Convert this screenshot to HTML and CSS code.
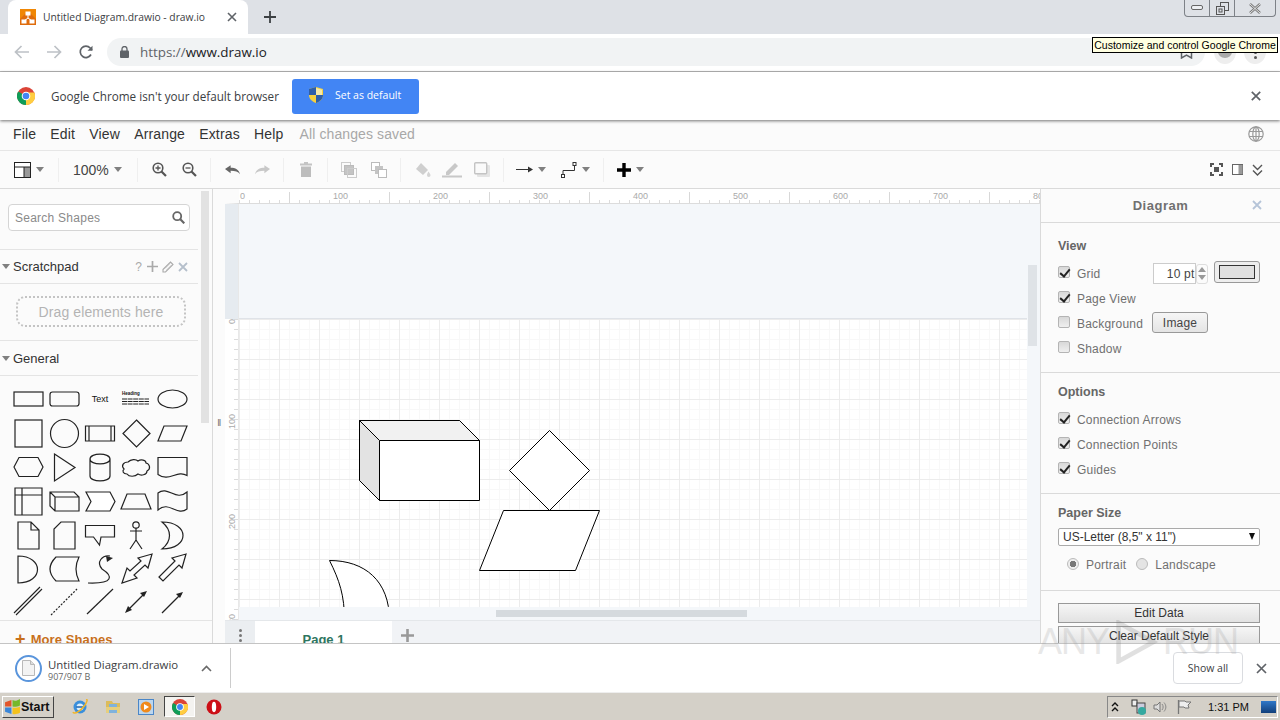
FILE: index.html
```html
<!DOCTYPE html>
<html lang="en">
<head>
    <meta charset="UTF-8">
    <title>Untitled Diagram.drawio - draw.io</title>
    <link rel="stylesheet" href="styles.css">
</head>
<body>
<div class="screen">

    <!-- Chrome tab strip -->
    <div class="tabstrip">
        <div class="tab">
            <svg class="favicon" width="16" height="16" viewBox="0 0 16 16"><rect width="16" height="16" fill="#f08705"/><path d="M0 16V10L5 5h6l5 5v6z" fill="#df6c0c"/><path d="M8 6v3M8 9l-4 3M8 9l4 3" stroke="#fff" fill="none"/><rect x="5.500" y="2.500" width="5" height="4" fill="#fff"/><rect x="1.500" y="10.500" width="5" height="4" fill="#fff"/><rect x="9.500" y="10.500" width="5" height="4" fill="#fff"/></svg>
            <span class="tab-title">Untitled Diagram.drawio - draw.io</span>
            <svg class="tab-close" width="10" height="10" viewBox="0 0 10 10"><path d="M1 1l8 8M9 1l-8 8" stroke="#5f6368" stroke-width="1.600"/></svg>
        </div>
        <svg class="new-tab" width="12" height="12" viewBox="0 0 12 12"><path d="M6 0v12M0 6h12" stroke="#3c4043" stroke-width="1.800"/></svg>
        <div class="win-buttons">
            <div class="win-btn"><svg width="12" height="6" viewBox="0 0 12 6"><rect x=".5" y=".5" width="11" height="4" rx="1.500" fill="#eef0f3" stroke="#666"/></svg></div>
            <div class="win-btn"><svg width="13" height="13" viewBox="0 0 13 13"><rect x="4.500" y=".5" width="8" height="8" fill="none" stroke="#555"/><rect x=".5" y="4.500" width="8" height="8" fill="#dee1e6" stroke="#555"/><rect x="3" y="7" width="3" height="3" fill="none" stroke="#555"/></svg></div>
            <div class="win-btn win-close"><svg width="12" height="11" viewBox="0 0 12 11"><path d="M1 1l10 9M11 1L1 10" stroke="#777" stroke-width="2.400"/><path d="M1 1l10 9M11 1L1 10" stroke="#eee" stroke-width=".9"/></svg></div>
        </div>
    </div>

    <!-- Chrome address bar -->
    <div class="addressbar">
        <svg class="nav-icon" width="16" height="14" viewBox="0 0 16 14"><path d="M15 7H2M7.500 1L1.500 7l6 6" fill="none" stroke="#bdc1c6" stroke-width="1.700"/></svg>
        <svg class="nav-icon" width="16" height="14" viewBox="0 0 16 14"><path d="M1 7h13M8.500 1l6 6-6 6" fill="none" stroke="#bdc1c6" stroke-width="1.700"/></svg>
        <svg class="nav-icon" width="14" height="14" viewBox="0 0 14 14"><path d="M12 9.500A5.700 5.700 0 1 1 11.200 3L13 5" fill="none" stroke="#5f6368" stroke-width="1.700"/><path d="M13.500 .8v5h-5z" fill="#5f6368"/></svg>
        <div class="omnibox">
            <svg width="9" height="12" viewBox="0 0 9 12"><rect y="4.500" width="9" height="7.500" rx="1" fill="#5f6368"/><path d="M2 5V3a2.500 2.500 0 0 1 5 0v2" fill="none" stroke="#5f6368" stroke-width="1.300"/></svg>
            <span class="url"><span class="url-scheme">https://</span>www.draw.io</span>
            <svg class="omni-star" width="13" height="13" viewBox="0 0 13 13"><path d="M1.500 1h10v11l-5-3-5 3z" fill="none" stroke="#5f6368" stroke-width="1.500"/></svg>
        </div>
        <div class="avatar"><span class="avatar-dot"></span></div>
        <div class="chrome-menu"><span></span><span></span><span></span></div>
    </div>

    <!-- Default browser infobar -->
    <div class="infobar">
        <svg width="18" height="18" viewBox="0 0 18 18"><circle cx="9" cy="9" r="9" fill="#db4437"/><path d="M9 9L1.200 4.500A9 9 0 0 0 9 18z" fill="#0f9d58"/><path d="M9 9v9A9 9 0 0 0 17.400 5.500H9z" fill="#ffcd40"/><circle cx="9" cy="9" r="4.300" fill="#fff"/><circle cx="9" cy="9" r="3.300" fill="#4285f4"/></svg>
        <span class="infobar-text">Google Chrome isn't your default browser</span>
        <button class="default-btn">
            <svg width="14" height="16" viewBox="0 0 14 16"><path d="M7 0l7 2v6c0 4-3 6.500-7 8-4-1.500-7-4-7-8V2z" fill="#f7d13d"/><path d="M7 0v8H0V2zM7 8h7c0 4-3 6.500-7 8z" fill="#2f5fa8"/><path d="M7 1l6 1.800V8H7z" fill="#f5e9a8"/></svg>
            Set as default
        </button>
        <svg class="infobar-close" width="10" height="10" viewBox="0 0 10 10"><path d="M.8.800l8.400 8.400M9.200.800L.8 9.200" stroke="#5f6368" stroke-width="1.700"/></svg>
    </div>

    <!-- draw.io menu -->
    <div class="menubar">
        <a>File</a><a>Edit</a><a>View</a><a>Arrange</a><a>Extras</a><a>Help</a>
        <span class="saved">All changes saved</span>
        <svg class="globe" width="16" height="16" viewBox="0 0 16 16"><g fill="none" stroke="#9a9a9a" stroke-width="1.200"><circle cx="8" cy="8" r="7.200"/><ellipse cx="8" cy="8" rx="3.200" ry="7.200"/><path d="M8 .8v14.400M1 5.500h14M1 10.500h14"/></g></svg>
    </div>

    <!-- draw.io toolbar -->
    <div class="toolbar">
        <div class="tb tb-view">
            <svg width="17" height="16" viewBox="0 0 17 16"><rect x=".5" y=".5" width="16" height="15" fill="#fff" stroke="#222"/><rect x="10" y="5" width="6" height="10" fill="#999"/><path d="M1 5h15M10 5v10" stroke="#222" fill="none"/></svg>
            <i class="caret"></i>
        </div>
        <span class="sep"></span>
        <div class="tb tb-zoom"><span>100%</span><i class="caret"></i></div>
        <span class="sep"></span>
        <div class="tb"><svg width="15" height="15" viewBox="0 0 15 15"><circle cx="6" cy="6" r="4.800" fill="none" stroke="#555" stroke-width="1.600"/><path d="M9.500 9.500L14 14" stroke="#555" stroke-width="2.200"/><path d="M3.500 6h5M6 3.500v5" stroke="#555" stroke-width="1.300"/></svg></div>
        <div class="tb"><svg width="15" height="15" viewBox="0 0 15 15"><circle cx="6" cy="6" r="4.800" fill="none" stroke="#555" stroke-width="1.600"/><path d="M9.500 9.500L14 14" stroke="#555" stroke-width="2.200"/><path d="M3.500 6h5" stroke="#555" stroke-width="1.300"/></svg></div>
        <span class="sep"></span>
        <div class="tb"><svg width="15" height="10" viewBox="0 0 16 10"><path d="M0 4l6-4v2.500c5 0 9 2 10 7-2-3-5-3.800-10-3.800V8.500z" fill="#666"/></svg></div>
        <div class="tb"><svg width="15" height="10" viewBox="0 0 16 10"><path d="M16 4l-6-4v2.500c-5 0-9 2-10 7 2-3 5-3.800 10-3.800V8.500z" fill="#c8c8c8"/></svg></div>
        <span class="sep"></span>
        <div class="tb tb-del"><svg width="12" height="15" viewBox="0 0 12 15"><path d="M0 1.500h12v2H0zM4 0h4v1.500H4z" fill="#c4c4c4"/><path d="M1 4.500h10V15H1z" fill="#bdbdbd"/></svg></div>
        <span class="sep"></span>
        <div class="tb"><svg width="16" height="16" viewBox="0 0 16 16"><rect x=".5" y=".5" width="9" height="9" fill="none" stroke="#ccc"/><rect x="3.500" y="3.500" width="9" height="9" fill="#c4c4c4" stroke="#bbb"/><rect x="6.500" y="6.500" width="9" height="9" fill="none" stroke="#ccc"/></svg></div>
        <div class="tb"><svg width="16" height="16" viewBox="0 0 16 16"><rect x=".5" y=".5" width="8" height="8" fill="#fff" stroke="#bbb"/><rect x="4" y="4" width="8" height="8" fill="#c4c4c4"/><rect x="7.500" y="7.500" width="8" height="8" fill="#fff" stroke="#bbb"/></svg></div>
        <span class="sep"></span>
        <div class="tb"><svg width="17" height="15" viewBox="0 0 17 15"><path d="M7 1l7 7-5 5-7-6z" fill="#cfcfcf"/><path d="M14.500 9.500c1.200 1.800 2 2.800 2 3.700a1.600 1.600 0 0 1-3.500 0c0-.9.400-1.900 1.500-3.700z" fill="#d4d4d4"/></svg></div>
        <div class="tb"><svg width="20" height="17" viewBox="0 0 20 17"><path d="M4 11L13 2l3 3-9 9H4z" fill="#c8c8c8"/><rect y="14.500" width="20" height="2" fill="#c8c8c8"/></svg></div>
        <div class="tb"><svg width="16" height="15" viewBox="0 0 16 15"><rect x="3" y="3" width="13" height="12" rx="1" fill="#e4e4e4"/><rect x=".7" y=".7" width="12" height="11" rx="1" fill="#fafafa" stroke="#c4c4c4" stroke-width="1.400"/></svg></div>
        <span class="sep"></span>
        <div class="tb tb-arrow">
            <svg width="17" height="9" viewBox="0 0 17 9"><path d="M0 4.500h13" stroke="#333"/><path d="M12 1.500l5 3-5 3z" fill="#333"/></svg>
            <i class="caret"></i>
        </div>
        <div class="tb tb-way">
            <svg width="16" height="16" viewBox="0 0 16 16"><path d="M2 13.500v-5h11.500V3" fill="none" stroke="#333"/><rect x=".5" y="12.500" width="3" height="3" fill="#fff" stroke="#333"/><rect x="12" y=".5" width="3" height="3" fill="#fff" stroke="#333"/></svg>
            <i class="caret"></i>
        </div>
        <span class="sep"></span>
        <div class="tb tb-plus">
            <svg width="14" height="14" viewBox="0 0 14 14"><path d="M7 0v14M0 7h14" stroke="#000" stroke-width="3.400"/></svg>
            <i class="caret"></i>
        </div>
        <div class="tb-right">
            <svg width="13" height="13" viewBox="0 0 13 13"><path d="M1 4V1h3M9 1h3v3M12 9v3H9M4 12H1V9" fill="none" stroke="#555" stroke-width="2"/><rect x="4" y="4" width="5" height="5" fill="#555"/></svg>
            <svg width="11" height="11" viewBox="0 0 11 11"><rect x=".5" y=".5" width="10" height="10" fill="#fff" stroke="#666"/><rect x="6.500" y="1" width="4" height="9" fill="#999"/></svg>
            <svg width="11" height="12" viewBox="0 0 11 12"><path d="M1 1l4.500 4.500L10 1M1 6.500L5.500 11 10 6.500" fill="none" stroke="#555" stroke-width="1.400"/></svg>
        </div>
    </div>

    <div class="main">

        <!-- Shapes sidebar -->
        <div class="sidebar">
            <div class="search-wrap">
                <div class="search">
                    <span>Search Shapes</span>
                    <svg width="13" height="13" viewBox="0 0 13 13"><circle cx="5.200" cy="5.200" r="4" fill="none" stroke="#666" stroke-width="1.800"/><path d="M8.300 8.300L12.300 12.300" stroke="#666" stroke-width="2.200"/></svg>
                </div>
            </div>
            <div class="side-head">
                <i class="caret"></i><span class="side-title">Scratchpad</span>
                <div class="side-tools">
                    <span class="help">?</span>
                    <svg width="11" height="11" viewBox="0 0 11 11"><path d="M5.500 0v11M0 5.500h11" stroke="#aaa" stroke-width="1.700"/></svg>
                    <svg width="12" height="12" viewBox="0 0 12 12"><path d="M1 8.500L8.500 1 11 3.500 3.500 11H1z" fill="none" stroke="#aaa" stroke-width="1.100"/><path d="M3 7.500l5-5M4.500 9l5-5" stroke="#bbb" stroke-width=".7"/></svg>
                    <svg width="10" height="10" viewBox="0 0 10 10"><path d="M1 1l8 8M9 1l-8 8" stroke="#b5bfcb" stroke-width="1.800"/></svg>
                </div>
            </div>
            <div class="drag-wrap"><div class="drag-box">Drag elements here</div></div>
            <div class="side-head side-head-general"><i class="caret"></i><span class="side-title">General</span></div>
            <svg class="palette" width="198" height="244" viewBox="0 376 198 244">
                <g fill="none" stroke="#222" stroke-width="1.200">
                    <rect x="14" y="392" width="29" height="14"/>
                    <rect x="50" y="392" width="29" height="14" rx="2.500"/>
                    <ellipse cx="172.500" cy="399" rx="14.500" ry="9"/>

                    <rect x="15" y="420" width="27" height="27"/>
                    <circle cx="64.500" cy="433.500" r="14"/>
                    <path d="M85.500 426h29v15h-29zM89 426v15M111 426v15"/>
                    <path d="M136.500 420l13.500 13.500-13.500 13.500-13.500-13.500z"/>
                    <path d="M164 426h23l-6 15h-23z"/>

                    <path d="M14 467l5-9.500h19l5 9.500-5 9.500h-19z"/>
                    <path d="M54.500 454l20.500 13.500-20.500 13.500z"/>
                    <path d="M90 459c0-6.500 20-6.500 20 0v17c0 6.500-20 6.500-20 0zM90 459c0 6.500 20 6.500 20 0"/>
                    <path d="M128 462c3-3 8-3 10-1 3-2 8-1 8 2 4 1 5 6 1 8 0 4-6 5-9 3-3 3-9 3-11 0-4 0-5-3-3-5-3-3-1-7 4-7z"/>
                    <path d="M158 457.500h29v18c-10-6-18 7-29-1z"/>

                    <path d="M15 488h27v27H15zM22 488v27M15 495h27"/>
                    <path d="M50 492h24l5 5v14H55l-5-5zM50 492l5 5h24M55 497v14"/>
                    <path fill="#fff" d="M86 492h24l5 9.500-5 9.500H86l5-9.500z"/>
                    <path d="M127 494h18l6 15h-30z"/>
                    <path d="M158 493c10-8 18 9 29-1v17c-10 8-18-9-29 1z"/>

                    <path d="M18 522h13l8 8v19H18zM31 522v8h8"/>
                    <path d="M61 522h14v27H54v-20z"/>
                    <path d="M85.500 525.500h29v11.500h-13.500l-1.500 8-6-8h-8z"/>
                    <circle cx="136" cy="525" r="3.200"/>
                    <path d="M136 528v12M130 531h12M136 540l-6 9M136 540l6 9"/>
                    <path d="M162 522c28 0 28 27 0 27 10-8 10-19 0-27z"/>

                    <path d="M18 556c26 0 26 27 0 27z"/>
                    <path d="M56 557h23c-4 8-4 16 0 24H56c-8-8-8-16 0-24z"/>
                    <path d="M88 583c26 1 25-7 14-14-6-7 0-14 8-13"/>
                    <path d="M123 583l5-15 3 3 11-10-3-3 14-4-4 14-3-3-11 10 3 3z" transform="translate(-1 0)"/>
                    <path d="M159 577l4 4 16-16 3 3 4-14-14 4 3 3z"/>

                    <path d="M15 615l26-26M17 617l26-26" stroke-width="1.100" transform="translate(-1 -2)"/>
                    <path d="M51 615l26-26" stroke-dasharray="2 1.500"/>
                    <path d="M87 614l26-25"/>
                    <path d="M128 610l16-16"/>
                    <path d="M162 613l19-19"/>
                </g>
                <g fill="#222">
                    <path d="M106 556l7 2-6 4zM125 613l3-7 4 4zM147 591l-7 2 4 4zM183 592l-7 2 4 4z"/>
                </g>
                <text x="100" y="402" class="pal-text">Text</text>
                <text x="122" y="395" class="pal-head">Heading</text>
                <path d="M122 399h27M122 401.500h27M122 404h27" stroke="#222" stroke-width="1" stroke-dasharray="5 .6"/>
            </svg>
            <div class="more-shapes"><span class="more-plus">+</span><span>More Shapes</span></div>
            <div class="side-scroll"></div>
        </div>

        <div class="splitter"><span>||</span></div>

        <!-- Diagram canvas -->
        <div class="editor">
            <div class="ruler-h">
                <span>0</span><span>100</span><span>200</span><span>300</span><span>400</span><span>500</span><span>600</span><span>700</span><span>800</span>
            </div>
            <div class="canvas-row">
                <div class="ruler-v">
                    <div class="ruler-v-gap"></div>
                    <div class="ruler-v-marks"><span>0</span><span>100</span><span>200</span><span>30</span></div>
                </div>
                <div class="viewport">
                    <div class="view-col">
                        <div class="page-gap"></div>
                        <div class="page">
                            <svg class="shapes" width="400" height="288" viewBox="0 319 400 288">
                                <g transform="translate(-239 0)" stroke="#000" stroke-width="1" fill="#fff">
                                    <path d="M359.500 420.500h100l20 20v60h-100l-20-20z"/>
                                    <path d="M359.500 420.500h100l20 20h-100z" fill="#f1f1f1"/>
                                    <path d="M359.500 420.500l20 20v60l-20-20z" fill="#e3e3e3"/>
                                    <path d="M549.500 430.500l40 40-40 40-40-40z"/>
                                    <path d="M503.500 510.500h96l-24 60h-96z"/>
                                    <path d="M329.500 560.500c35 0 60 20 60 60h-45c0-25-5-40-15-60z"/>
                                </g>
                            </svg>
                        </div>
                    </div>
                    <div class="vscroll"><div class="vscroll-thumb"></div></div>
                    <div class="hscroll"><div class="hscroll-thumb"></div></div>
                </div>
            </div>
            <div class="pagebar">
                <div class="page-menu"><span></span><span></span><span></span></div>
                <div class="page-tab">Page 1</div>
                <svg class="page-add" width="13" height="13" viewBox="0 0 13 13"><path d="M6.500 0v13M0 6.500h13" stroke="#999" stroke-width="2.600"/></svg>
            </div>
        </div>

        <!-- Format panel -->
        <div class="format">
            <div class="format-head">Diagram
                <svg class="format-close" width="10" height="10" viewBox="0 0 10 10"><path d="M1 1l8 8M9 1l-8 8" stroke="#b5c4d8" stroke-width="1.800"/></svg>
            </div>
            <div class="section">
                <h4>View</h4>
                <div class="row">
                    <span class="check on"></span><label>Grid</label>
                    <div class="spinner"><span class="pt">10 pt</span><span class="spin"><i></i><i class="down"></i></span></div>
                    <div class="swatch"><span></span></div>
                </div>
                <div class="row"><span class="check on"></span><label>Page View</label></div>
                <div class="row"><span class="check"></span><label>Background</label><button class="img-btn">Image</button></div>
                <div class="row"><span class="check"></span><label>Shadow</label></div>
            </div>
            <div class="section">
                <h4>Options</h4>
                <div class="row"><span class="check on"></span><label>Connection Arrows</label></div>
                <div class="row"><span class="check on"></span><label>Connection Points</label></div>
                <div class="row"><span class="check on"></span><label>Guides</label></div>
            </div>
            <div class="section section-paper">
                <h4>Paper Size</h4>
                <div class="select">US-Letter (8,5" x 11")<i></i></div>
                <div class="radios">
                    <span class="radio on"></span><label>Portrait</label>
                    <span class="radio"></span><label>Landscape</label>
                </div>
            </div>
            <div class="section section-btns">
                <button class="wide-btn">Edit Data</button>
                <button class="wide-btn">Clear Default Style</button>
            </div>
        </div>
    </div>

    <!-- Chrome download shelf -->
    <div class="downloads">
        <div class="dl-icon"><svg width="13" height="16" viewBox="0 0 13 16"><path d="M.5.500h8l4 4v11H.5z" fill="#f3f3f3" stroke="#b9b9b9"/><path d="M8.500.500v4h4" fill="#ddd" stroke="#b9b9b9"/></svg></div>
        <div class="dl-text">
            <div class="dl-name">Untitled Diagram.drawio</div>
            <div class="dl-size">907/907 B</div>
        </div>
        <svg class="dl-chevron" width="11" height="7" viewBox="0 0 11 7"><path d="M1 6l4.500-4.500L10 6" fill="none" stroke="#6a6a6a" stroke-width="1.600"/></svg>
        <span class="dl-sep"></span>
        <button class="show-all">Show all</button>
        <svg class="dl-close" width="11" height="11" viewBox="0 0 11 11"><path d="M1 1l9 9M10 1l-9 9" stroke="#5f6368" stroke-width="1.700"/></svg>
    </div>

    <!-- Windows taskbar -->
    <div class="taskbar">
        <div class="start">
            <svg width="17" height="16" viewBox="0 0 16 15"><path d="M1 3l6-2v6H1z" fill="#e2562b"/><path d="M8 1c2 1 4 1 7-1v6c-3 1.500-5 1.500-7 1z" fill="#76b82a"/><path d="M1 8h6v6l-6-2z" fill="#3a86d8"/><path d="M8 8c2 .5 4 .5 7-1v6c-3 1.500-5 1.500-7 1z" fill="#f4c21c"/></svg>
            Start
        </div>
        <div class="task-icon task-ie"><svg width="16" height="16" viewBox="0 0 16 16"><circle cx="8" cy="8" r="6.500" fill="#3a8fdc"/><circle cx="8" cy="8" r="3.500" fill="#dff0fb"/><path d="M4 8h8" stroke="#2a6fb8" stroke-width="1.600"/><path d="M1 13c1 3 8-1 12-7 2-3 3-6 1-5.500" fill="none" stroke="#f0b52a" stroke-width="1.500"/></svg></div>
        <div class="task-icon"><svg width="16" height="15" viewBox="0 0 16 15"><path d="M1 2h6l1 2h7v10H1z" fill="#dcbc5c"/><path d="M4 5h8v9H4z" fill="#7fb2dc"/><path d="M1 8h14v6h-3v-3H4v3H1z" fill="#e6cf7e"/></svg></div>
        <div class="task-icon"><svg width="16" height="16" viewBox="0 0 16 16"><rect x=".5" y=".5" width="15" height="15" fill="#bcd6ee" stroke="#4a86c8"/><circle cx="8" cy="8" r="5.500" fill="#f08a1c"/><path d="M6 5l5 3-5 3z" fill="#fff"/></svg></div>
        <div class="task-chrome"><svg width="16" height="16" viewBox="0 0 18 18"><circle cx="9" cy="9" r="9" fill="#db4437"/><path d="M9 9L1.200 4.500A9 9 0 0 0 9 18z" fill="#0f9d58"/><path d="M9 9v9A9 9 0 0 0 17.400 5.500H9z" fill="#ffcd40"/><circle cx="9" cy="9" r="4.300" fill="#fff"/><circle cx="9" cy="9" r="3.300" fill="#4285f4"/></svg></div>
        <div class="task-icon"><svg width="16" height="16" viewBox="0 0 16 16"><circle cx="8" cy="8" r="7.500" fill="#cc0f16"/><ellipse cx="8" cy="8" rx="2.200" ry="5.200" fill="#fff"/></svg></div>
        <div class="tray">
            <svg width="8" height="10" viewBox="0 0 8 10"><path d="M1 4l3-3 3 3M1 9l3-3 3 3" fill="none" stroke="#111" stroke-width="1.400"/></svg>
            <svg class="tray-net" width="16" height="16" viewBox="0 0 16 16"><rect x="1" y="1" width="5" height="6" fill="#eee" stroke="#333"/><rect x="6" y="4" width="8" height="10" fill="#ccd" stroke="#444"/><circle cx="11" cy="12" r="4" fill="#35a9a0"/></svg>
            <svg width="15" height="14" viewBox="0 0 15 14"><path d="M1 5h3l3-3v10L4 9H1z" fill="#ddd" stroke="#777"/><path d="M9 4c1.500 2 1.500 4 0 6M11 2.500c2.500 3 2.500 6 0 9" fill="none" stroke="#888"/></svg>
            <svg class="tray-flag" width="15" height="14" viewBox="0 0 15 14"><path d="M1.500 0v14" stroke="#777" stroke-width="1.300"/><path d="M2 1h6l1 1h5l-3 3 1 3H8L7 7H2z" fill="#eee" stroke="#777"/></svg>
            <span class="clock">1:31 PM</span>
            <span class="show-desktop"></span>
        </div>
    </div>

    <!-- Overlays -->
    <div class="tooltip">Customize and control Google Chrome</div>
    <div class="watermark">
        <span>ANY</span>
        <svg width="46" height="44" viewBox="0 0 50 48"><path d="M6 3l38 21L6 45z" fill="none" stroke="#777" stroke-width="5"/></svg>
        <span>RUN</span>
    </div>
</div>
</body>
</html>
```

FILE: styles.css
```css
* {
    box-sizing: border-box;
}
html, body {
    margin: 0;
    height: 100%;
    overflow: hidden;
}
body {
    font-family: "Liberation Sans", Arial, sans-serif;
    background-color: #fff;
}
svg {
    display: block;
    flex: none;
}
button {
    font-family: inherit;
}
.screen {
    position: relative;
    width: 1280px;
    height: 720px;
    display: flex;
    flex-direction: column;
    overflow: hidden;
}

/* Chrome tab strip */
.tabstrip {
    height: 34px;
    background-color: #dee1e6;
    display: flex;
    align-items: center;
    padding-left: 8px;
    position: relative;
}
.tab {
    width: 240px;
    height: 34px;
    background-color: #fff;
    border-radius: 8px 8px 0 0;
    display: flex;
    align-items: center;
    padding-left: 12px;
}
.tab-title {
    margin-left: 7px;
    margin-top: -1px;
    width: 184px;
    font-family: "Open Sans", sans-serif;
    font-size: 10.300px;
    color: #3c4043;
    white-space: nowrap;
}
.new-tab {
    margin-left: 16px;
}
.win-buttons {
    margin-left: auto;
    margin-right: 4px;
    align-self: flex-start;
    display: flex;
    width: 92px;
    height: 17px;
    border: 1px solid #7d8187;
    border-top: none;
    border-radius: 0 0 4px 4px;
}
.win-btn {
    width: 25px;
    display: flex;
    align-items: center;
    justify-content: center;
    border-right: 1px solid #7d8187;
}
.win-close {
    flex: 1;
    border-right: none;
}

/* Chrome address bar */
.addressbar {
    height: 38px;
    background-color: #fff;
    border-bottom: 1px solid #b9b9b9;
    display: flex;
    align-items: center;
    padding: 0 14px 1px 14px;
}
.nav-icon {
    margin-right: 16px;
}
.nav-icon:nth-child(2) {
    margin-right: 17px;
}
.nav-icon:nth-child(3) {
    margin-right: 14px;
}
.omnibox {
    width: 1098px;
    flex: none;
    height: 28px;
    background-color: #f1f3f4;
    border-radius: 14px;
    display: flex;
    align-items: center;
    padding-left: 13px;
}
.url {
    margin-left: 11px;
    font-family: "Open Sans", sans-serif;
    font-size: 13.400px;
    color: #202124;
}
.url-scheme {
    color: #5f6368;
}
.omni-star {
    margin-left: auto;
    margin-right: 12px;
}
.avatar {
    margin-left: 9px;
    width: 24px;
    height: 24px;
    border-radius: 50%;
    background-color: #eee;
    display: flex;
    align-items: center;
    justify-content: center;
}
.avatar-dot {
    width: 14px;
    height: 12px;
    border-radius: 50%;
    background-color: #aaa;
}
.chrome-menu {
    margin-left: 8px;
    width: 24px;
    height: 24px;
    border-radius: 50%;
    background-color: #eee;
    display: flex;
    flex-direction: column;
    align-items: center;
    justify-content: center;
    gap: 2px;
}
.chrome-menu span {
    width: 3px;
    height: 3px;
    border-radius: 50%;
    background-color: #555;
}

/* Infobar */
.infobar {
    height: 48px;
    background-color: #fff;
    display: flex;
    align-items: center;
    padding-left: 17px;
    box-shadow: 0 1px 3px rgba(0, 0, 0, 0.55);
    position: relative;
    z-index: 2;
}
.infobar-text {
    margin-left: 16px;
    width: 241px;
    font-family: "Open Sans", sans-serif;
    font-size: 11.700px;
    color: #3c4043;
    white-space: nowrap;
}
.default-btn {
    width: 127px;
    height: 35px;
    background-color: #4285f4;
    border: none;
    border-radius: 3px;
    color: #fff;
    font-family: "Open Sans", sans-serif;
    font-size: 10.500px;
    display: flex;
    align-items: center;
    gap: 12px;
    padding: 0 0 2px 17px;
}
.infobar-close {
    margin-left: auto;
    margin-right: 19px;
}

/* draw.io menu */
.menubar {
    height: 31px;
    background-color: #fbfbfb;
    border-bottom: 1px solid #e6e6e6;
    display: flex;
    align-items: center;
    padding: 0 0 3px 13px;
    font-size: 14px;
    letter-spacing: 0.15px;
    color: #333;
}
.menubar a {
    margin-right: 14.200px;
}
.saved {
    margin-left: 2px;
    letter-spacing: 0.1px;
    color: #a8a8a8;
}
.globe {
    margin-left: auto;
    margin-right: 16px;
}

/* draw.io toolbar */
.toolbar {
    height: 38px;
    background-color: #fbfbfb;
    border-bottom: 1px solid #dadada;
    display: flex;
    align-items: center;
    padding-left: 7px;
}
.tb {
    width: 30px;
    height: 30px;
    display: flex;
    align-items: center;
    justify-content: center;
}
.tb-view {
    width: 45px;
    justify-content: flex-start;
    padding-left: 7px;
}
.tb-zoom {
    width: 66px;
    justify-content: flex-start;
    padding-left: 8px;
    font-size: 14px;
    color: #444;
}
.tb-del {
    width: 31px;
}
.tb-arrow {
    width: 40px;
    justify-content: flex-start;
    padding-left: 6px;
}
.tb-way {
    width: 47px;
    justify-content: flex-start;
    padding-left: 11px;
}
.tb-plus {
    width: 40px;
    justify-content: flex-start;
    padding-left: 7px;
}
.caret {
    display: block;
    flex: none;
    width: 0;
    height: 0;
    margin-left: 5px;
    border-left: 4.500px solid transparent;
    border-right: 4.500px solid transparent;
    border-top: 5px solid #808080;
}
.sep {
    width: 1px;
    height: 24px;
    margin: 0 6px;
    background-color: #efefef;
}
.tb-right {
    margin-left: auto;
    margin-right: 17px;
    display: flex;
    align-items: center;
    gap: 9px;
}

/* Main area */
.main {
    height: 454px;
    display: flex;
    background-color: #fbfbfb;
    overflow: hidden;
}

/* Shapes sidebar */
.sidebar {
    position: relative;
    width: 213px;
    height: 454px;
    border-right: 1px solid #dadada;
    overflow: hidden;
    background-color: #fbfbfb;
}
.search-wrap {
    width: 198px;
    height: 61px;
    padding: 15px 0 0 8px;
    border-bottom: 1px solid #e4e4e4;
}
.search {
    width: 182px;
    height: 27px;
    background-color: #fff;
    border: 1px solid #d5d5d5;
    border-radius: 4px;
    display: flex;
    align-items: center;
    justify-content: space-between;
    padding: 0 4px 0 6px;
    font-size: 12px;
    letter-spacing: 0.25px;
    color: #8a8a8a;
}
.side-head {
    width: 198px;
    height: 34px;
    border-bottom: 1px solid #e4e4e4;
    display: flex;
    align-items: center;
    padding-left: 2px;
}
.side-head .caret {
    margin-left: 0;
}
.side-head-general {
    height: 35px;
}
.side-title {
    margin-left: 3px;
    font-size: 13px;
    color: #333;
}
.side-head-general .side-title {
    margin-top: 1px;
}
.side-tools {
    margin-left: auto;
    margin-right: 10px;
    display: flex;
    align-items: center;
    gap: 4px;
}
.help {
    font-size: 12px;
    color: #aaa;
    margin-right: 1px;
}
.drag-wrap {
    width: 198px;
    height: 57px;
    padding: 12px 0 0 16px;
    border-bottom: 1px solid #e4e4e4;
}
.drag-box {
    width: 170px;
    height: 31px;
    border: 2px dotted #c4c4c4;
    border-radius: 9px;
    display: flex;
    align-items: center;
    justify-content: center;
    font-size: 14px;
    letter-spacing: 0.1px;
    color: #b4b4b4;
}
.palette {
    display: block;
}
.pal-text {
    font-size: 9px;
    fill: #111;
    text-anchor: middle;
}
.pal-head {
    font-size: 4.500px;
    font-weight: bold;
    fill: #111;
}
.more-shapes {
    height: 40px;
    border-top: 1px solid #e4e4e4;
    padding: 11px 0 0 15px;
    display: flex;
    align-items: flex-start;
    gap: 5px;
    font-size: 13px;
    line-height: 16px;
    font-weight: bold;
    letter-spacing: 0.1px;
    color: #c8701c;
}
.more-plus {
    font-size: 18px;
    line-height: 14px;
}
.side-scroll {
    position: absolute;
    left: 201px;
    top: 2px;
    width: 8px;
    height: 232px;
    background-color: #e2e2e2;
}
.splitter {
    width: 12px;
    padding-top: 229px;
    font-size: 7px;
    font-weight: bold;
    letter-spacing: -0.5px;
    text-align: center;
    color: #777;
    background-color: #fbfbfb;
}

/* Canvas */
.editor {
    width: 815px;
    display: flex;
    flex-direction: column;
    background-color: #fff;
}
.ruler-h {
    height: 15px;
    flex: none;
    display: flex;
    overflow: hidden;
    background-color: #fff;
    border-left: 14px solid #fbfbfb;
    background-image:
        repeating-linear-gradient(to right, transparent 0, transparent 50px, #d8d8d8 50px, #d8d8d8 51px, transparent 51px, transparent 100px),
        repeating-linear-gradient(to right, #dcdcdc 0, #dcdcdc 1px, transparent 1px, transparent 10px);
    background-position: 0 3px, 0 11px;
    background-size: 100% 12px, 100% 4px;
    background-repeat: no-repeat;
    border-bottom: 1px solid #dcdcdc;
}
.ruler-h span {
    width: 100px;
    flex: none;
    font-size: 9px;
    line-height: 14px;
    color: #aaa;
    transform: translateX(-6px);
}
.ruler-h span:first-child {
    transform: translateX(1px);
}
.canvas-row {
    flex: 1;
    display: flex;
    min-height: 0;
}
.ruler-v {
    width: 14px;
    flex: none;
    display: flex;
    flex-direction: column;
    border-right: 1px solid #e8e8e8;
}
.ruler-v-gap {
    height: 115px;
    flex: none;
    background-color: #e6ebf0;
}
.ruler-v-marks {
    flex: 1;
    background-color: #fff;
    background-image: repeating-linear-gradient(to bottom, #dcdcdc 0, #dcdcdc 1px, transparent 1px, transparent 10px);
    background-size: 4px 100%;
    background-position: right top;
    background-repeat: no-repeat;
    overflow: hidden;
}
.ruler-v-marks span {
    display: block;
    height: 100px;
    writing-mode: vertical-rl;
    transform: translate(2px, -5px) rotate(180deg);
    transform-origin: center;
    font-size: 9px;
    color: #aaa;
    text-align: right;
}
.ruler-v-marks span:first-child {
    transform: translate(2px, 0) rotate(180deg);
}
.viewport {
    position: relative;
    flex: 1;
    min-width: 0;
    overflow: hidden;
    background-color: #f4f7fa;
}
.view-col {
    width: 788px;
    height: 403px;
    overflow: hidden;
    display: flex;
    flex-direction: column;
}
.page-gap {
    height: 115px;
    flex: none;
    background-color: #f4f7fa;
    border-bottom: 1px solid #dfe3e8;
}
.page {
    position: relative;
    flex: 1;
    background-color: #fff;
    background-image:
        linear-gradient(to right, #ececec 1px, transparent 1px),
        linear-gradient(to bottom, #ececec 1px, transparent 1px),
        linear-gradient(to right, #f8f8f8 1px, transparent 1px),
        linear-gradient(to bottom, #f8f8f8 1px, transparent 1px);
    background-size: 40px 40px, 40px 40px, 10px 10px, 10px 10px;
}
.shapes {
    position: absolute;
    left: 0;
    top: 0;
}
.vscroll {
    position: absolute;
    right: 0;
    top: 0;
    width: 13px;
    height: 100%;
}
.vscroll-thumb {
    position: absolute;
    left: 1px;
    top: 61px;
    width: 9px;
    height: 81px;
    background-color: #dfe3e7;
}
.hscroll {
    position: absolute;
    left: 0;
    bottom: 0;
    width: 100%;
    height: 13px;
}
.hscroll-thumb {
    position: absolute;
    left: 257px;
    top: 3px;
    width: 251px;
    height: 7px;
    background-color: #d5dade;
}

/* Page tabs */
.pagebar {
    height: 23px;
    flex: none;
    display: flex;
    background-color: #f1f3f6;
    border-top: 1px solid #e4e7ea;
    overflow: hidden;
}
.page-menu {
    width: 30px;
    flex: none;
    display: flex;
    flex-direction: column;
    align-items: center;
    padding-top: 8px;
    gap: 2px;
    background-color: #ebeef1;
}
.page-menu span {
    width: 3px;
    height: 3px;
    background-color: #777;
    border-radius: 50%;
}
.page-tab {
    width: 137px;
    height: 32px;
    background-color: #fff;
    text-align: center;
    font-size: 13px;
    font-weight: bold;
    line-height: 38px;
    color: #2e7560;
}
.page-add {
    margin: 8px 0 0 9px;
}

/* Format panel */
.format {
    width: 240px;
    flex: none;
    background-color: #fbfbfb;
    border-left: 1px solid #dadada;
    overflow: hidden;
    color: #707070;
    font-size: 12px;
    letter-spacing: 0.2px;
}
.format-head {
    position: relative;
    height: 34px;
    border-bottom: 1px solid #dadada;
    text-align: center;
    line-height: 33px;
    font-size: 13px;
    font-weight: bold;
    letter-spacing: 0.5px;
    color: #707070;
}
.format-close {
    position: absolute;
    right: 18px;
    top: 11px;
}
.section {
    padding: 11px 0 11px 17px;
    border-bottom: 1px solid #dadada;
}
.section:nth-child(2) {
    padding-top: 15px;
}
.section h4 {
    margin: 0 0 6px;
    height: 17px;
    line-height: 17px;
    font-size: 12.500px;
    letter-spacing: 0;
    font-weight: bold;
    color: #666;
}
.row {
    height: 25px;
    display: flex;
    align-items: center;
}
.row label {
    margin-left: 7px;
}
.check {
    position: relative;
    width: 12px;
    height: 12px;
    flex: none;
    margin-top: -3px;
    border: 1px solid #b4b4b4;
    border-radius: 2px;
    background: linear-gradient(#d8d8d8, #efefef);
}
.check.on::after {
    content: "";
    position: absolute;
    left: 3px;
    top: 0;
    width: 4px;
    height: 8px;
    border-right: 2px solid #222;
    border-bottom: 2px solid #222;
    transform: rotate(40deg);
}
.spinner {
    margin-left: 53px;
    display: flex;
    align-items: center;
}
.pt {
    width: 43px;
    height: 21px;
    background-color: #fff;
    border: 1px solid #ccc;
    text-align: right;
    line-height: 20px;
    color: #444;
    padding-right: 1px;
}
.spin {
    width: 12px;
    height: 20px;
    display: flex;
    flex-direction: column;
    justify-content: center;
    gap: 3px;
    align-items: center;
    border: 1px solid #ddd;
    border-radius: 3px;
}
.spin i {
    display: block;
    width: 0;
    height: 0;
    border-left: 4px solid transparent;
    border-right: 4px solid transparent;
    border-bottom: 5px solid #999;
}
.spin i.down {
    border-bottom: none;
    border-top: 5px solid #999;
}
.swatch {
    margin-left: 6px;
    width: 46px;
    height: 22px;
    margin-top: -3px;
    border: 1px solid #999;
    border-radius: 3px;
    background-color: #eee;
    padding: 3px 4px;
}
.swatch span {
    display: block;
    height: 14px;
    background-color: #e0e0e0;
    border: 1px solid #333;
}
.img-btn {
    margin-left: 9px;
    width: 56px;
    height: 21px;
    margin-top: -2px;
    padding: 0;
    border: 1px solid #999;
    border-radius: 3px;
    background: linear-gradient(#f6f6f6, #e4e4e4);
    font-size: 12px;
    letter-spacing: 0.2px;
    color: #444;
}
.section-paper {
    padding-bottom: 13px;
}
.select {
    position: relative;
    width: 202px;
    height: 18px;
    border: 1px solid #aaa;
    border-radius: 2px;
    background-color: #fff;
    padding-left: 4px;
    line-height: 16px;
    letter-spacing: 0;
    color: #333;
}
.select i {
    position: absolute;
    right: 4px;
    top: 4px;
    border-left: 3.500px solid transparent;
    border-right: 3.500px solid transparent;
    border-top: 7px solid #111;
}
.radios {
    margin-top: 7px;
    height: 24px;
    padding-left: 9px;
    display: flex;
    align-items: center;
}
.radios label {
    margin-left: 7px;
    margin-right: 10px;
}
.radio {
    width: 12px;
    height: 12px;
    flex: none;
    margin-top: -3px;
    border: 1px solid #bbb;
    border-radius: 50%;
    background-color: #e4e4e4;
}
.radio.on {
    background: radial-gradient(circle, #777 0, #777 3px, #eee 3.500px);
}
.section-btns {
    padding-top: 12px;
    border-bottom: none;
}
.wide-btn {
    display: block;
    width: 202px;
    height: 20px;
    margin-bottom: 3px;
    padding: 0;
    border: 1px solid #999;
    background: linear-gradient(#f6f6f6, #e2e2e2);
    font-size: 12px;
    color: #333;
}

/* Download shelf */
.downloads {
    height: 49px;
    background-color: #fff;
    border-top: 1px solid #c4c4c4;
    display: flex;
    align-items: center;
    padding-left: 15px;
    font-family: "Open Sans", sans-serif;
    position: relative;
    z-index: 2;
}
.dl-icon {
    width: 27px;
    height: 27px;
    border: 2px solid #5a95dc;
    border-radius: 50%;
    display: flex;
    align-items: center;
    justify-content: center;
}
.dl-text {
    margin-left: 6px;
    margin-top: 3px;
    width: 153px;
}
.dl-name {
    font-size: 11.400px;
    line-height: 14px;
    color: #3c4043;
    white-space: nowrap;
}
.dl-size {
    font-size: 9px;
    line-height: 10px;
    color: #666;
}
.dl-sep {
    margin-left: 18px;
    width: 1px;
    height: 40px;
    background-color: #ccc;
}
.show-all {
    margin-left: auto;
    width: 70px;
    height: 32px;
    padding: 0;
    background-color: #fff;
    border: 1px solid #dadce0;
    border-radius: 4px;
    font-family: "Open Sans", sans-serif;
    font-size: 10.500px;
    color: #3c4043;
}
.dl-close {
    margin-left: 13px;
    margin-right: 13px;
}

/* Windows taskbar */
.taskbar {
    height: 28px;
    border-top: 1px solid #eee;
    background-color: #d4d0c8;
    display: flex;
    align-items: center;
    padding-left: 2px;
    position: relative;
    z-index: 2;
}
.start {
    width: 52px;
    height: 22px;
    border: 1px solid;
    border-color: #fff #444 #444 #fff;
    display: flex;
    align-items: center;
    gap: 0;
    padding-left: 1px;
    font-size: 12.500px;
    font-weight: bold;
    color: #111;
}
.task-icon {
    width: 16px;
    margin-left: 17px;
    display: flex;
    justify-content: center;
}
.task-ie {
    margin-left: 18px;
}
.task-chrome {
    width: 31px;
    height: 21px;
    margin-left: 10px;
    background-color: #f4f3f0;
    border: 1px solid;
    border-color: #444 #fff #fff #444;
    display: flex;
    align-items: center;
    justify-content: center;
}
.task-chrome + .task-icon {
    margin-left: 11px;
}
.tray {
    margin-left: auto;
    margin-right: 2px;
    width: 171px;
    height: 22px;
    border: 1px solid;
    border-color: #888 #fff #fff #888;
    display: flex;
    align-items: center;
    padding-left: 3px;
    gap: 6px;
    font-size: 11px;
    color: #111;
}
.tray-net {
    margin-left: 6px;
}
.tray-flag {
    margin-left: 3px;
}
.clock {
    margin-left: 10px;
    white-space: nowrap;
}
.show-desktop {
    margin-left: 6px;
    width: 15px;
    height: 12px;
    background: linear-gradient(#2f78c8, #123f7a);
}

/* Overlays */
.tooltip {
    position: absolute;
    left: 1092px;
    top: 37px;
    width: 186px;
    height: 16px;
    background-color: #ffffe1;
    border: 1px solid #000;
    font-size: 10.500px;
    line-height: 14px;
    text-align: center;
    white-space: nowrap;
    color: #000;
    z-index: 5;
}
.watermark {
    position: absolute;
    left: 1038px;
    top: 620px;
    display: flex;
    align-items: center;
    gap: 4px;
    opacity: 0.22;
    font-size: 36px;
    letter-spacing: -1px;
    color: #999;
    z-index: 6;
    pointer-events: none;
}
```
